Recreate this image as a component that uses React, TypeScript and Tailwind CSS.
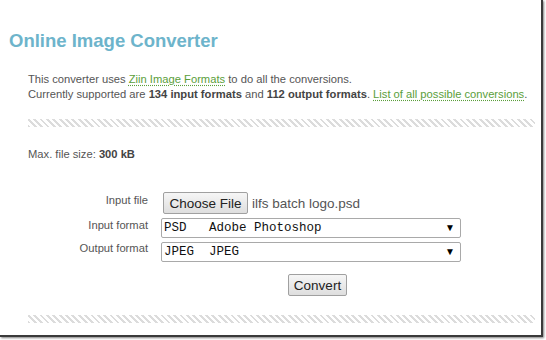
import React from 'react';

const Stripe = () => (
  <div className="h-[8px] w-[507px] bg-[repeating-linear-gradient(45deg,#dcdcdc_0px,#dcdcdc_2px,transparent_2px,transparent_4.5px)]" />
);

const Select = ({ value }: { value: string }) => (
  <div className="relative flex h-[20px] w-[300px] items-center rounded-[2px] border border-[#a9a9a9] bg-white pl-[2px]">
    <span className="whitespace-pre font-['Liberation_Mono',monospace] text-[12.5px] text-[#111]">{value}</span>
    <span className="absolute right-[5px] top-[2px] text-[10px] leading-[14px] text-black">▼</span>
  </div>
);

export default function App() {
  return (
    <div className="h-[340px] w-[546px] bg-white font-['Liberation_Sans',Arial,sans-serif]">
      <div className="h-[337px] w-[543px] border-b-[2px] border-r-[2px] border-[#3a3a3a] shadow-[1px_1px_2px_rgba(0,0,0,0.5)]">
        {/* Header */}
        <h1 className="pl-[9px] pt-[30px] text-[18.5px] font-bold leading-[22px] text-[#6db4cb]">Online Image Converter</h1>

        <div className="pl-[28px] pt-[20px] text-[11.2px] leading-[15px] text-[#555]">
          <p>
            This converter uses{' '}
            <a className="text-[#5a9e3a] underline decoration-dotted decoration-[#5a9e3a] underline-offset-2">Ziin Image Formats</a> to do all the conversions.
          </p>
          <p>
            Currently supported are <b className="text-[#444]">134 input formats</b> and <b className="text-[#444]">112 output formats</b>.{' '}
            <a className="text-[#5a9e3a] underline decoration-dotted decoration-[#5a9e3a] underline-offset-2">List of all possible conversions</a>.
          </p>

          <div className="pt-[17px]">
            <Stripe />
          </div>

          <p className="pt-[20px]">
            Max. file size: <b className="text-[#444]">300 kB</b>
          </p>

          {/* Form */}
          <div className="grid grid-cols-[120px_auto] gap-x-[13px] pt-[30px]">
            <div className="pt-[1px] text-right">Input file</div>
            <div className="flex items-center gap-[4px] pl-[2px]">
              <button className="h-[22px] w-[85px] rounded-[2px] border border-[#a0a0a0] bg-[linear-gradient(#f6f6f6,#dedede)] text-[13.5px] text-[#222]">Choose File</button>
              <span className="text-[13.5px] text-[#555]">ilfs batch logo.psd</span>
            </div>

            <div className="pt-[4px] text-right">Input format</div>
            <div className="pt-[4px]">
              <Select value={'PSD   Adobe Photoshop'} />
            </div>

            <div className="pt-[3px] text-right">Output format</div>
            <div className="pt-[4px]">
              <Select value={'JPEG  JPEG'} />
            </div>

            <div />
            <div className="pl-[127px] pt-[12px]">
              <button className="h-[22px] w-[59px] rounded-[2px] border border-[#a0a0a0] bg-[linear-gradient(#f6f6f6,#dedede)] text-[13.5px] text-[#222]">Convert</button>
            </div>
          </div>

          <div className="pt-[19px]">
            <Stripe />
          </div>
        </div>
      </div>
    </div>
  );
}
